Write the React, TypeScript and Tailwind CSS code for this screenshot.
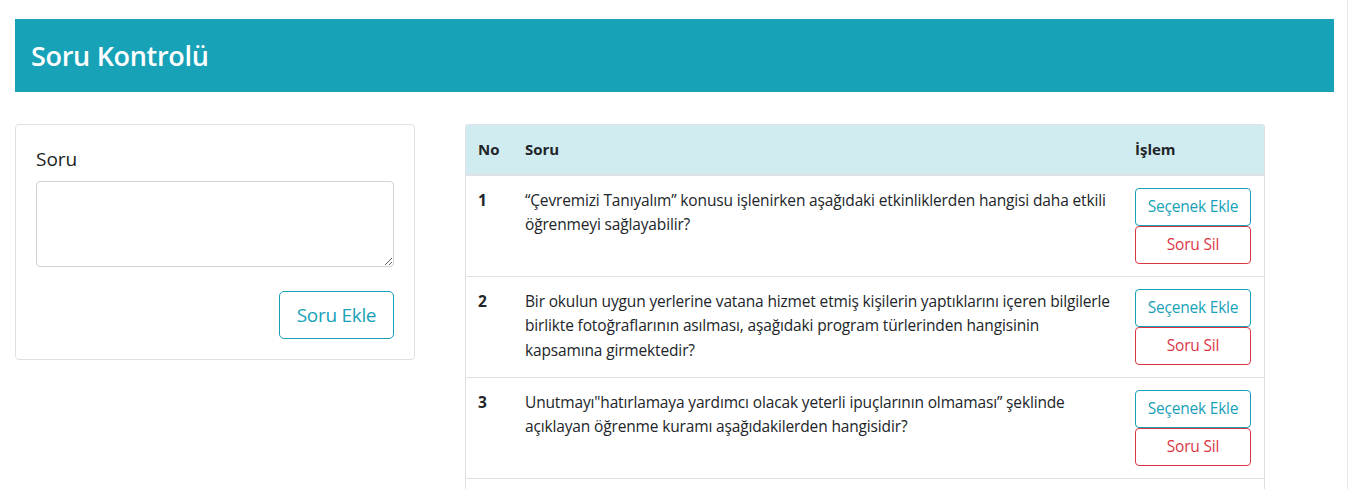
import React from "react";

const rows = [
  {
    no: "1",
    lines: [
      "“Çevremizi Tanıyalım” konusu işlenirken aşağıdaki etkinliklerden hangisi daha etkili",
      "öğrenmeyi sağlayabilir?",
    ],
  },
  {
    no: "2",
    lines: [
      "Bir okulun uygun yerlerine vatana hizmet etmiş kişilerin yaptıklarını içeren bilgilerle",
      "birlikte fotoğraflarının asılması, aşağıdaki program türlerinden hangisinin",
      "kapsamına girmektedir?",
    ],
  },
  {
    no: "3",
    lines: [
      "Unutmayı\"hatırlamaya yardımcı olacak yeterli ipuçlarının olmaması” şeklinde",
      "açıklayan öğrenme kuramı aşağıdakilerden hangisidir?",
    ],
  },
];

export default function App() {
  return (
    <div
      className="flex w-full h-[489px] overflow-hidden bg-white text-[#212529]"
      style={{ fontFamily: '"Open Sans", "Noto Sans", sans-serif' }}
    >
      <div className="flex-1 pl-[15px] pr-[13px] pt-[19px]">
        <div className="bg-[#17a2b8] h-[73px] flex items-center pl-[16px]">
          <h2 className="text-white text-[27px] font-semibold leading-none tracking-[-0.3px]">
            Soru Kontrolü
          </h2>
        </div>
        <div className="flex mt-[32px] gap-[50px] items-start">
          <div className="w-[400px] border border-[#dee2e6] rounded-[4px] px-[20px] pt-[20px] pb-[20px]">
            <div className="text-[19px] font-medium leading-[29px] mb-[7px] text-[#1b1e21]">Soru</div>
            <textarea className="block w-full h-[86px] border border-[#ced4da] rounded-[4px] resize-y" />
            <div className="flex justify-end mt-[24px]">
              <button className="h-[48px] w-[115px] border border-[#17a2b8] text-[#17a2b8] rounded-[5px] text-[19px] tracking-[-0.3px]">
                Soru Ekle
              </button>
            </div>
          </div>
          <div className="w-[800px] border-x border-t border-[#dee2e6] rounded-t-[3px] overflow-hidden">
            <div className="flex bg-[#d1ecf1] border-b border-[#dee2e6] h-[50px] items-center font-bold text-[15px]">
              <div className="w-[47px] pl-[12px]">No</div>
              <div className="flex-1 pl-[12px]">Soru</div>
              <div className="w-[141px] pl-[12px]">İşlem</div>
            </div>
            {rows.map((r) => (
              <div key={r.no} className="flex border-t border-[#dee2e6] h-[101px]">
                <div className="w-[47px] pl-[12px] pt-[12px] font-bold text-[15.5px] leading-[24px]">
                  {r.no}
                </div>
                <div className="flex-1 pl-[12px] pt-[12px] text-[15.5px] leading-[24.3px] tracking-[-0.15px] whitespace-nowrap">
                  {r.lines.map((l, i) => (
                    <div key={i}>{l}</div>
                  ))}
                </div>
                <div className="w-[141px] pl-[12px] pt-[12px] flex flex-col">
                  <button className="w-[116px] h-[38px] border border-[#17a2b8] text-[#17a2b8] rounded-[4px] text-[15.5px] tracking-[-0.2px]">
                    Seçenek Ekle
                  </button>
                  <button className="w-[116px] h-[38px] border border-[#dc3545] text-[#dc3545] rounded-[4px] text-[15.5px] tracking-[-0.2px]">
                    Soru Sil
                  </button>
                </div>
              </div>
            ))}
            <div className="h-[20px] border-t border-[#dee2e6]" />
          </div>
        </div>
      </div>
      <div className="w-[3px] border-l border-[#e6e6e6] self-stretch" />
    </div>
  );
}
